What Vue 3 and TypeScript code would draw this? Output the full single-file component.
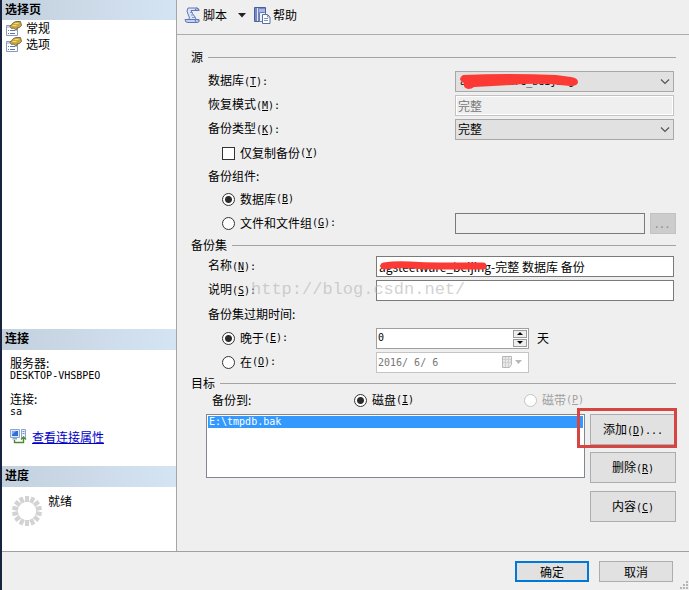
<script setup lang="ts">
import { ref } from 'vue'

const pages = ['常规', '选项']
const database = ref('agsteelware_beijing')
const backupType = ref('完整')
const copyOnly = ref(false)
const component = ref('database')
const setName = ref('agsteelware_beijing-完整 数据库 备份')
const description = ref('')
const expiry = ref('after')
const days = ref(0)
const medium = ref('disk')
const files = ref(['E:\\tmpdb.bak'])
const selected = ref('E:\\tmpdb.bak')
const spokes = Array.from({ length: 14 }, (_, i) => (i * 360) / 14)

function step(amount: number) {
  days.value = Math.max(0, days.value + amount)
}
</script>

<template>
  <div class="window">
    <div class="body">
      <aside class="side">
        <h2>选择页</h2>
        <nav class="pages">
          <a v-for="page in pages" :key="page" href="#">
            <svg width="16" height="15" viewBox="0 0 16 15">
              <path d="M.5 4.500h11v10H.5z" fill="#fff" stroke="#8d97b8" />
              <path d="M1 5h10v2H1z" fill="#c9d2e8" />
              <path d="M2 9.500h1M4 9.500h5M2 12.500h1M4 12.500h5" stroke="#5873c4" />
              <path d="M4 5.500 7.500 1.500 10 .5h4.500l1 4-2 2-2.500.5-1 2.500-2-2.500-2.500.5z" fill="#c9aa42" stroke="#6b5726" stroke-width=".8" />
              <path d="M8.500 2.500h4M6.500 4.500h4" stroke="#f3dc86" />
            </svg>
            {{ page }}
          </a>
        </nav>

        <h2>连接</h2>
        <div class="connection">
          <dl>
            <dt>服务器:</dt>
            <dd class="lat">DESKTOP-VHSBPEO</dd>
            <dt>连接:</dt>
            <dd class="lat">sa</dd>
          </dl>
          <a class="properties" href="#">
            <svg width="17" height="17" viewBox="0 0 17 17">
              <path d="M.5 1.500h9v8h-9z" fill="#dfe8f7" stroke="#8ea4ce" />
              <path d="M2 3h6v5H2z" fill="#2d6fd6" />
              <path d="M2 3h4L2 7z" fill="#76adf3" />
              <path d="M3 10h4v1.500H2z" fill="#8ea4ce" />
              <path d="M11.500 1.500h4v9h-4z" fill="#eef2f8" stroke="#8ea4ce" />
              <path d="M12.500 3.500h2M12.500 5.500h2" stroke="#7d8fb4" />
              <path d="M4.500 12v2.500h9V9M11 11.500 13.500 9l2.500 2.500" fill="none" stroke="#4d8b32" stroke-width="1.400" />
            </svg>
            <span>查看连接属性</span>
          </a>
        </div>

        <h2>进度</h2>
        <div class="progress">
          <svg width="30" height="30" viewBox="-15 -15 30 30">
            <rect v-for="angle in spokes" :key="angle" x="-2" y="-15" width="4" height="6" fill="#d3d3d3" :transform="`rotate(${angle})`" />
          </svg>
          <span>就绪</span>
        </div>
      </aside>

      <main class="main">
        <div class="toolbar">
          <button type="button">
            <svg width="17" height="17" viewBox="0 0 17 17">
              <path d="M4 1h9q2 .5 2 2.500H7q1 3 3 5t2 4.500H5Q6 10 4 7T4 1z" fill="#dbe5fa" stroke="#6177b4" />
              <path d="M12.500 1Q11 1.500 11.500 3.500H15Q15 1.500 12.500 1z" fill="#a9bbe6" stroke="#6177b4" />
              <path d="M1 12.500h10q0 3 2.500 3H4q-3 0-3-3z" fill="#c3d1f2" stroke="#6177b4" />
              <path d="M13.500 15.500q2.500-.5 1.500-3h-3" fill="#a9bbe6" stroke="#6177b4" />
              <path d="M6 5.500h3M7 8h3M8 10.500h3" stroke="#7f96d2" />
            </svg>
            <span>脚本</span>
            <svg class="drop" width="8" height="5" viewBox="0 0 8 5"><path d="M0 0h8L4 4.500z" fill="#222" /></svg>
          </button>
          <button type="button">
            <svg width="17" height="17" viewBox="0 0 17 17">
              <path d="M.5.5h11v14H.5z" fill="#7289c4" stroke="#4a5f9c" />
              <path d="M3.500 1v13" stroke="#dce5fb" />
              <path d="M5 2h6v4H5z" fill="#a8b8e2" />
              <path d="M5.500 5.500h5l2 2v7h-7z" fill="#eef3ff" stroke="#6a7cae" />
              <path d="M8.500 7.500h5l2.500 2.500v6.500H8.500z" fill="#fff" stroke="#5a6da3" />
              <path d="M13.500 7.500V10H16M10 11.500h4M10 13.500h4" fill="none" stroke="#7f91c0" />
            </svg>
            <span>帮助</span>
          </button>
        </div>

        <form class="form" @submit.prevent>
          <section class="source">
            <h3>源</h3>
            <div class="row wide">
              <label for="database">数据库<span class="lat">(<u>T</u>):</span></label>
              <div class="select">
                <select id="database" v-model="database" class="latin-field">
                  <option>agsteelware_beijing</option>
                </select>
                <svg class="chevron" width="10" height="6" viewBox="0 0 10 6"><path d="m1 .5 4 4 4-4" fill="none" stroke="#555" stroke-width="1.200" /></svg>
                <svg class="mark" width="122" height="17" viewBox="0 0 122 17">
                  <path d="M4 1Q1 3 1 5t4 4q-1 5 4 6 4 0 6-2 28-1 48-3 24-1 38 1l10 1q8 0 8-4t-7-5L97 1Q50-1 4 1z" fill="#fb3a36" />
                </svg>
              </div>
            </div>
            <div class="row wide">
              <label for="recovery">恢复模式<span class="lat">(<u>M</u>):</span></label>
              <input id="recovery" class="recovery" type="text" value="完整" disabled>
            </div>
            <div class="row wide">
              <label for="type">备份类型<span class="lat">(<u>K</u>):</span></label>
              <div class="select">
                <select id="type" v-model="backupType">
                  <option>完整</option>
                </select>
                <svg class="chevron" width="10" height="6" viewBox="0 0 10 6"><path d="m1 .5 4 4 4-4" fill="none" stroke="#555" stroke-width="1.200" /></svg>
              </div>
            </div>
            <div class="row">
              <label class="choice"><input v-model="copyOnly" type="checkbox">仅复制备份<span class="lat">(<u>Y</u>)</span></label>
            </div>
            <div class="row short"><span>备份组件:</span></div>
            <div class="row">
              <label class="choice"><input v-model="component" type="radio" name="component" value="database">数据库<span class="lat">(<u>B</u>)</span></label>
            </div>
            <div class="row wide browse-row">
              <label class="choice"><input v-model="component" type="radio" name="component" value="files">文件和文件组<span class="lat">(<u>G</u>):</span></label>
              <div class="browse">
                <input class="filegroup" type="text" aria-label="文件和文件组" disabled>
                <button type="button" disabled>...</button>
              </div>
            </div>
          </section>

          <section class="set">
            <h3>备份集</h3>
            <div class="row">
              <label for="name">名称<span class="lat">(<u>N</u>):</span></label>
              <div class="named">
                <input id="name" v-model="setName" type="text">
                <svg class="mark" width="110" height="14" viewBox="0 0 110 14">
                  <path d="M4 7Q16 5 30 6T60 7t43 0" fill="none" stroke="#fb3a36" stroke-width="7" stroke-linecap="round" />
                </svg>
              </div>
            </div>
            <div class="row">
              <label for="description">说明<span class="lat">(<u>S</u>):</span></label>
              <input id="description" v-model="description" type="text">
              <span class="watermark">http://blog.csdn.net/</span>
            </div>
            <div class="row"><span>备份集过期时间:</span></div>
            <div class="row">
              <label class="choice"><input v-model="expiry" type="radio" name="expiry" value="after">晚于<span class="lat">(<u>E</u>):</span></label>
              <div class="period">
                <div class="spin">
                  <input v-model.number="days" class="latin-field" type="number" min="0" aria-label="天">
                  <div class="arrows">
                    <button type="button" aria-label="增加" @click="step(1)"><svg width="6" height="3" viewBox="0 0 6 3"><path d="M0 3h6L3 0z" /></svg></button>
                    <button type="button" aria-label="减少" @click="step(-1)"><svg width="6" height="3" viewBox="0 0 6 3"><path d="M0 0h6L3 3z" /></svg></button>
                  </div>
                </div>
                <span>天</span>
              </div>
            </div>
            <div class="row">
              <label class="choice"><input v-model="expiry" type="radio" name="expiry" value="on">在<span class="lat">(<u>O</u>):</span></label>
              <div class="date">
                <input class="latin-field" type="text" value="2016/ 6/ 6" aria-label="日期" disabled>
                <svg width="20" height="12" viewBox="0 0 20 12">
                  <path d="M.5.5h9v8l-2 3h-7z" fill="#e8e8e8" stroke="#b8b8b8" />
                  <path d="M1 3.500h8M1 6.500h8M3.500 1v10M6.500 1v10" stroke="#cfcfcf" />
                  <path d="M13 4h7l-3.500 4z" fill="#b8b8b8" />
                </svg>
              </div>
            </div>
          </section>

          <section>
            <h3>目标</h3>
            <div class="media">
              <span class="to">备份到:</span>
              <label class="choice"><input v-model="medium" type="radio" name="medium" value="disk">磁盘<span class="lat">(<u>I</u>)</span></label>
              <label class="choice off"><input v-model="medium" type="radio" name="medium" value="tape" disabled>磁带<span class="lat">(<u>P</u>)</span></label>
            </div>
            <div class="target">
              <ul class="files" role="listbox" aria-label="备份到">
                <li v-for="file in files" :key="file" role="option" :aria-selected="file === selected" :class="{ active: file === selected }" @click="selected = file">{{ file }}</li>
              </ul>
              <div class="actions">
                <div class="highlighted">
                  <button type="button" class="btn">添加<span class="lat">(<u>D</u>)...</span></button>
                </div>
                <button type="button" class="btn">删除<span class="lat">(<u>R</u>)</span></button>
                <button type="button" class="btn">内容<span class="lat">(<u>C</u>)</span></button>
              </div>
            </div>
          </section>
        </form>
      </main>
    </div>

    <footer class="footer">
      <button type="button" class="btn primary">确定</button>
      <button type="button" class="btn">取消</button>
      <svg class="grip" width="9" height="9" viewBox="0 0 9 9">
        <path d="M6 0h2v2H6zM3 3h2v2H3zM6 3h2v2H6zM0 6h2v2H0zM3 6h2v2H3zM6 6h2v2H6z" fill="#b5b5b5" />
      </svg>
    </footer>
  </div>
</template>

<style>
body {
  margin: 0;
  background: #efefef;
}
</style>

<style scoped>
* {
  box-sizing: border-box;
}
.window {
  display: flex;
  flex-direction: column;
  min-height: 100vh;
  border-left: 2px solid #17233f;
  background: #efefef;
  color: #000;
  font: 12px/16px "Noto Sans CJK SC", "Liberation Sans", sans-serif;
}
button,
input,
select {
  margin: 0;
  border-radius: 0;
  color: inherit;
  font: inherit;
}
svg {
  flex: none;
}
.lat {
  font-family: "DejaVu Sans Mono", monospace;
  font-size: 10px;
}
.body {
  display: flex;
  flex: 1;
  border-bottom: 1px solid #a0a0a0;
}

.side {
  display: flex;
  flex-direction: column;
  width: 175px;
  border-right: 1px solid #a5a5a5;
  background: #fff;
}
h2 {
  height: 21px;
  margin: 0;
  padding: 0 3px;
  background: linear-gradient(90deg, #c3d0de, #d5e4f3);
  font-size: 12px;
  font-weight: 700;
  line-height: 18px;
}
h2:first-child {
  height: 20px;
}
.pages {
  flex: 1;
}
.pages a {
  display: flex;
  align-items: center;
  gap: 4px;
  height: 16px;
  padding-left: 4px;
  color: #000;
  text-decoration: none;
}
.connection {
  height: 116px;
  padding: 6px 8px;
}
dl {
  margin: 0;
}
dt {
  line-height: 14px;
}
dd {
  margin: 0 0 10px;
  line-height: 12px;
}
.properties {
  display: flex;
  align-items: center;
  gap: 5px;
  color: #0000c8;
}
.progress {
  display: flex;
  gap: 6px;
  height: 64px;
  padding: 6px 10px;
}
.progress svg {
  margin-top: 3px;
}

.main {
  flex: 1;
  min-width: 0;
}
.toolbar {
  display: flex;
  gap: 8px;
  height: 35px;
  padding: 0 7px 4px;
  border-bottom: 1px solid #a9adab;
}
.toolbar button {
  display: flex;
  align-items: center;
  gap: 2px;
  padding: 0;
  border: 0;
  background: none;
}
.drop {
  margin-left: 9px;
}
.form {
  padding: 12px 13px 0 14px;
}
h3 {
  display: flex;
  align-items: center;
  gap: 5px;
  height: 18px;
  margin: 0;
  font-size: 12px;
  font-weight: 400;
}
h3::after {
  flex: 1;
  height: 1px;
  background: #a3a3a3;
  content: "";
}
.source h3 {
  margin: 1px 0 3px;
}
.set h3 {
  margin-top: 1px;
}
.row {
  display: grid;
  grid-template-columns: 168px 1fr;
  align-items: center;
  position: relative;
  height: 24px;
  padding: 0 2px 0 17px;
}
.row.wide {
  grid-template-columns: 247px 1fr;
}
.row.short {
  height: 22px;
}
.row.browse-row {
  padding-right: 0;
}
.choice {
  display: flex;
  align-items: center;
  white-space: nowrap;
}
.row .choice {
  padding-left: 14px;
}
input[type="text"],
input[type="number"] {
  width: 100%;
  min-width: 0;
  height: 21px;
  padding: 0 2px;
  border: 1px solid #7a7a7a;
  background: #fff;
}
input.recovery {
  border-color: #c3c3c3;
  outline: 1px solid #fff;
  outline-offset: -2px;
  background: #efefef;
  color: #777;
}
input.filegroup {
  background: #efefef;
}
.latin-field {
  font-family: "DejaVu Sans Mono", monospace;
  font-size: 10px;
}
input[type="radio"],
input[type="checkbox"] {
  flex: none;
  width: 13px;
  height: 13px;
  margin-right: 5px;
  border: 1px solid #333;
  background: #fff;
  appearance: none;
}
input[type="radio"] {
  border-radius: 50%;
}
input[type="radio"]:checked {
  background: radial-gradient(circle, #2b2b2b 3px, #fff 4px);
}
input[type="checkbox"]:checked {
  background: #333;
  box-shadow: inset 0 0 0 2px #fff;
}
.off {
  color: #a0a0a0;
}
.off input[type="radio"] {
  border-color: #c4c4c4;
}
.select,
.named {
  position: relative;
}
select {
  display: block;
  width: 100%;
  height: 21px;
  padding: 0 20px 0 2px;
  border: 1px solid #a8a8a8;
  background: #e1e1e1;
  appearance: none;
}
select.latin-field {
  padding: 2px 20px 0 4px;
}
.chevron {
  position: absolute;
  top: 8px;
  right: 4px;
  pointer-events: none;
}
.mark {
  position: absolute;
  top: 3px;
  left: 4px;
  pointer-events: none;
}
.browse {
  display: flex;
  gap: 5px;
}
.browse button {
  flex: none;
  width: 26px;
  height: 21px;
  padding: 0;
  border: 1px solid #c2c2c2;
  background: #cccccc;
  color: #8c8c8c;
  letter-spacing: 2px;
}
.watermark {
  position: absolute;
  left: 60px;
  color: #b4b4b499;
  font-family: "Liberation Mono", monospace;
  font-size: 17px;
  pointer-events: none;
}
.period {
  display: flex;
  align-items: center;
  gap: 8px;
}
.spin,
.date {
  display: flex;
  width: 153px;
  height: 21px;
  border: 1px solid #9f9f9f;
  background: #fff;
}
.spin input[type="number"],
.date input[type="text"] {
  height: 19px;
  padding: 0 1px;
  border: 0;
  background: none;
  appearance: textfield;
}
.spin input::-webkit-inner-spin-button {
  appearance: none;
}
.spin input[type="number"] {
  height: 17px;
}
.arrows {
  display: flex;
  flex: none;
  flex-direction: column;
  gap: 1px;
  padding: 1px;
}
.arrows button {
  display: flex;
  flex: 1;
  align-items: center;
  justify-content: center;
  width: 14px;
  min-height: 0;
  padding: 0;
  border: 1px solid #9b9b9b;
  background: #eee;
}
.date {
  align-items: center;
  padding-right: 6px;
  border-color: #c4c4c4;
  color: #777;
}
.media {
  display: grid;
  grid-template-columns: 142px 170px 1fr;
  height: 22px;
  padding-left: 21px;
}
.media .choice {
  height: 16px;
}
.target {
  display: flex;
  gap: 5px;
  padding-left: 15px;
}
.files {
  flex: 1;
  height: 64px;
  margin: 0;
  padding: 1px;
  border: 1px solid #828790;
  background: #fff;
  font-family: "DejaVu Sans Mono", monospace;
  font-size: 10px;
  line-height: 12px;
  list-style: none;
}
.files li {
  padding: 0 1px;
}
.files .active {
  background: #3399ff;
  color: #fff;
}
.actions {
  display: grid;
  gap: 8px;
  width: 86px;
}
.btn {
  height: 31px;
  padding: 0;
  border: 1px solid #adadad;
  background: #e1e1e1;
}
.highlighted {
  position: relative;
  height: 30px;
}
.highlighted .btn {
  width: 100%;
}
.highlighted::after {
  position: absolute;
  inset: -6px -1px -4px -13px;
  border: 3px solid #d64541;
  content: "";
  pointer-events: none;
}

.footer {
  display: flex;
  gap: 10px;
  justify-content: flex-end;
  position: relative;
  height: 38px;
  padding: 9px 16px 0 0;
}
.footer .btn {
  width: 74px;
  height: 21px;
}
.footer .primary {
  border: 2px solid #0078d7;
}
.grip {
  position: absolute;
  right: 0;
  bottom: 0;
}
</style>
